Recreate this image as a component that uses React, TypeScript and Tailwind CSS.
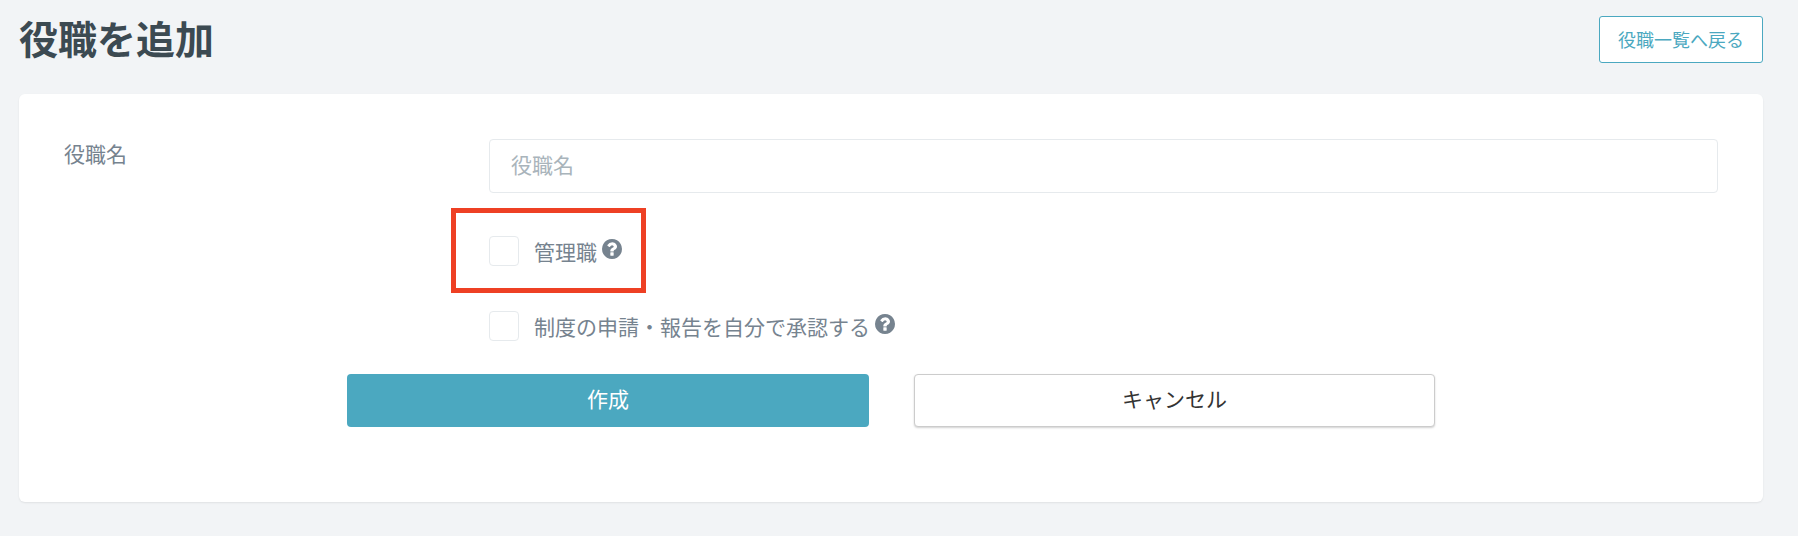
function HelpIcon() {
  return (
    <svg viewBox="128 128 1536 1536" className="ml-[5px] -mt-[4px] h-[20px] w-[20px] fill-[#76838f]">
      <path d="M1024 1376v-192q0-14-9-23t-23-9h-192q-14 0-23 9t-9 23v192q0 14 9 23t23 9h192q14 0 23-9t9-23zm256-672q0-88-55.5-163t-138.5-116-170-41q-243 0-371 213-15 24 8 42l132 100q7 6 19 6 16 0 25-12 53-68 86-92 34-24 86-24 48 0 85.5 26t37.5 59q0 38-20 61t-68 45q-63 28-115.5 86.5t-52.5 125.5v36q0 14 9 23t23 9h192q14 0 23-9t9-23q0-19 21.5-49.5t54.5-49.5q32-18 49-28.5t46-35 44.5-48 28-60.5 12.5-81zm384 192q0 209-103 385.5t-279.5 279.5-385.5 103-385.5-103-279.5-279.5-103-385.5 103-385.5 279.5-279.5 385.5-103 385.5 103 279.5 279.5 103 385.5z" />
    </svg>
  );
}

function CheckRow({ label, className = "" }: { label: string; className?: string }) {
  return (
    <label className={`flex items-center ${className}`}>
      <input
        type="checkbox"
        className="h-[30px] w-[30px] appearance-none rounded-[4px] border border-[#e6eaed] bg-white"
      />
      <span className="ml-[15px] text-[21px] leading-[30px] text-[#76838f]">{label}</span>
      <HelpIcon />
    </label>
  );
}

export default function App() {
  return (
    <div
      className="h-[536px] overflow-hidden bg-[#f2f4f6] pl-[19px] pr-[35px] pt-[16px]"
      style={{ fontFamily: '"Noto Sans CJK JP", "Liberation Sans", sans-serif' }}
    >
      <div className="flex h-[47px] items-start justify-between">
        <h1 className="-mt-[2px] text-[39px] leading-[47px] font-bold text-[#3c4a52]">役職を追加</h1>
        <button className="h-[47px] w-[164px] rounded-[3px] border border-[#4ba8c0] bg-white pb-[1px] text-[18px] text-[#4ba8c0]">
          役職一覧へ戻る
        </button>
      </div>

      <div className="relative mt-[31px] h-[408px] rounded-[6px] bg-white px-[45px] pt-[45px] shadow-[0_1px_2px_rgba(0,0,0,0.08)]">
        <div className="flex">
          <div className="-mt-[1px] w-[425px] text-[21px] leading-[30px] text-[#76838f]">役職名</div>
          <div className="flex-1">
            <input
              placeholder="役職名"
              className="h-[54px] w-full rounded-[4px] border border-[#e6eaed] bg-white px-[21px] pb-[4px] text-[21px] outline-none placeholder:text-[#a9b4bb]"
            />
            <CheckRow label="管理職" className="mt-[43px]" />
            <CheckRow label="制度の申請・報告を自分で承認する" className="mt-[45px]" />
          </div>
        </div>

        <div className="mt-[33px] flex justify-center gap-[45px]">
          <button className="h-[53px] w-[522px] rounded-[4px] bg-[#4ba8c0] pb-[3px] text-[21px] text-white">作成</button>
          <button className="h-[53px] w-[521px] rounded-[4px] border border-[#cccccc] bg-white pb-[3px] text-[21px] text-[#333333] shadow-[0_1px_2px_rgba(0,0,0,0.18)]">
            キャンセル
          </button>
        </div>

        {/* annotation box over the first checkbox */}
        <div className="absolute left-[432px] top-[114px] h-[85px] w-[195px] border-[5px] border-[#ee4024]" />
      </div>
    </div>
  );
}
